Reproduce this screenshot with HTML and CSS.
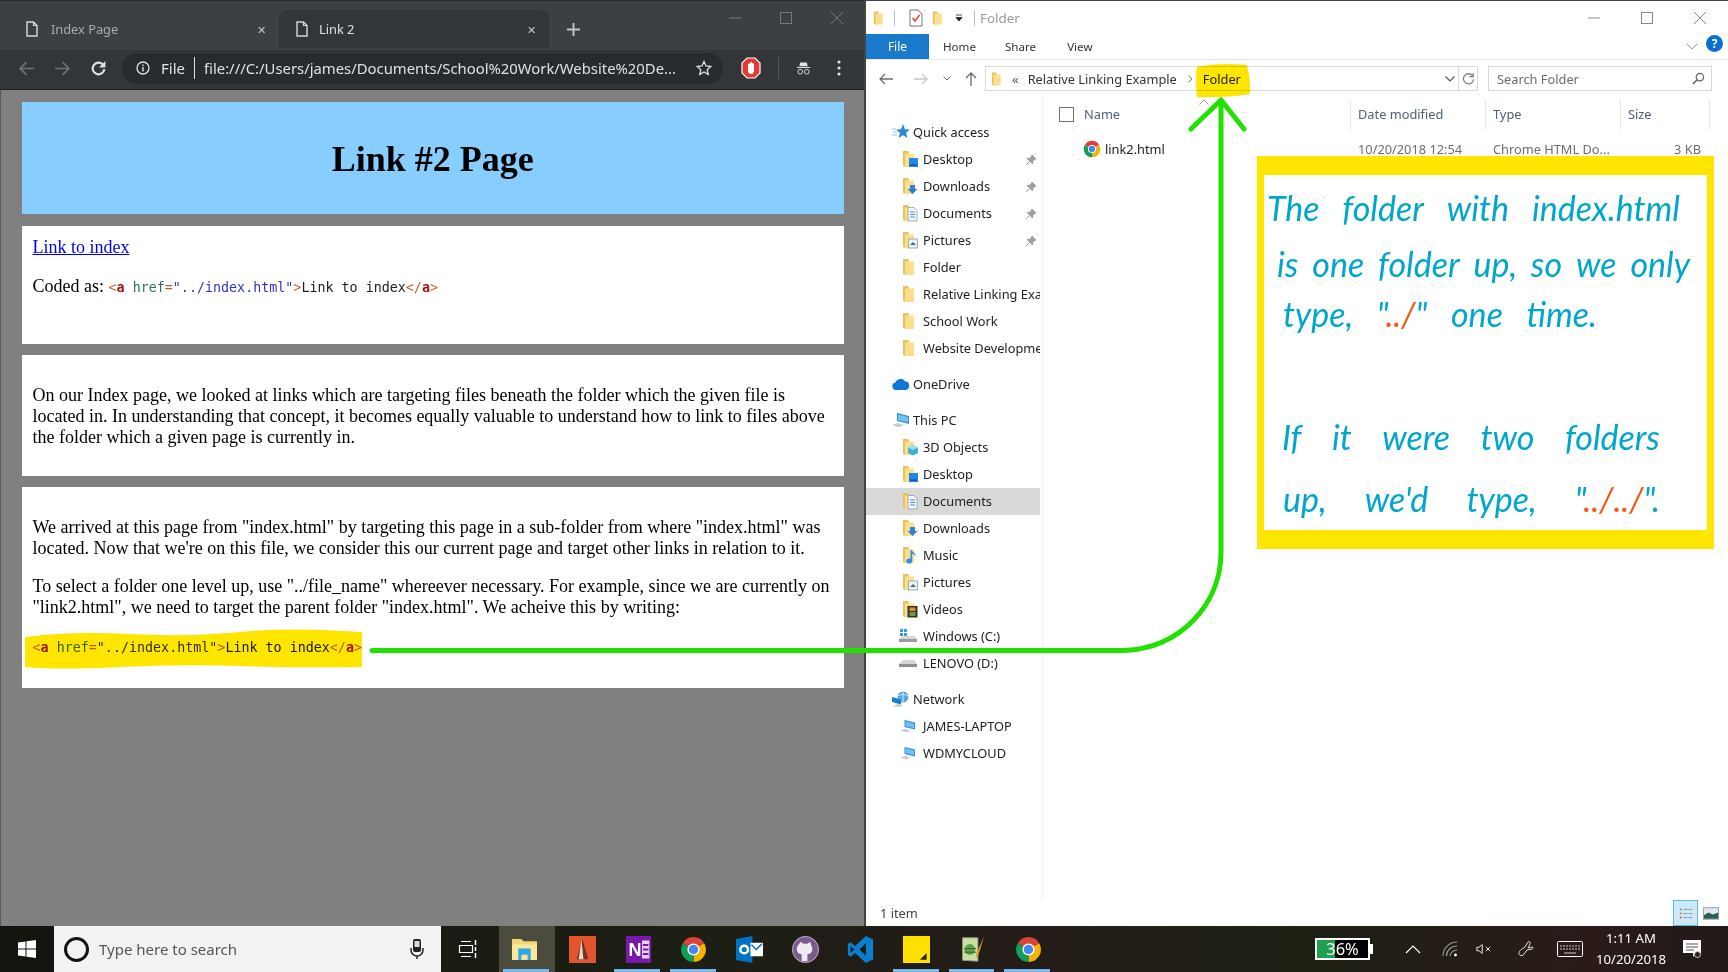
FILE: index.html
```html
<!DOCTYPE html>
<html lang="en">
<head>
<meta charset="utf-8">
<title>Relative linking</title>
<link rel="stylesheet" href="styles.css">
</head>
<body>
<svg class="defs" aria-hidden="true">
  <symbol id="doc" viewBox="0 0 12 16"><path d="M1 1h6.5L11 4.5V15H1z" fill="none" stroke="currentColor" stroke-width="1.4"/><path d="M7.5 1v3.5H11" fill="none" stroke="currentColor" stroke-width="1.2"/></symbol>
  <symbol id="chrome" viewBox="0 0 24 24"><path d="M12 12L2.47 6.5A11 11 0 0 1 21.53 6.5Z" fill="#db4437"/><path d="M12 12L21.53 6.5A11 11 0 0 1 12 23Z" fill="#f4b400"/><path d="M12 12L12 23A11 11 0 0 1 2.47 6.5Z" fill="#0f9d58"/><circle cx="12" cy="12" r="5.4" fill="#fff"/><circle cx="12" cy="12" r="4.2" fill="#4285f4"/></symbol>
  <symbol id="folder" viewBox="0 0 16 18"><path d="M1 1h5l1 1.5V17H3l-2-1z" fill="#e9c25f"/><path d="M3 3.5h9V17H3z" fill="#fbdf8c"/></symbol>
  <symbol id="f-desktop" viewBox="0 0 16 18"><use href="#folder" width="16" height="18"/><rect x="7" y="8" width="9" height="9" fill="#1e88e5"/><rect x="8" y="14.5" width="7" height="1.2" fill="#0d47a1"/></symbol>
  <symbol id="f-down" viewBox="0 0 16 18"><use href="#folder" width="16" height="18"/><path d="M8 8h5v4h2.5l-5 5-5-5H8z" fill="#2f80d8"/></symbol>
  <symbol id="f-docs" viewBox="0 0 16 18"><use href="#folder" width="16" height="18"/><path d="M6 3.5h6l3 3V17H6z" fill="#f4f7fa" stroke="#8d99a6" stroke-width=".8"/><path d="M8 8h5M8 10.5h5M8 13h5" stroke="#4e8fd0"/></symbol>
  <symbol id="f-pics" viewBox="0 0 16 18"><use href="#folder" width="16" height="18"/><rect x="6.5" y="8" width="9" height="9" fill="#eef2f5" stroke="#8d99a6" stroke-width=".8"/><path d="M8 14l3-3 3 3z" fill="#3b6e8f"/></symbol>
  <symbol id="f-3d" viewBox="0 0 16 18"><use href="#folder" width="16" height="18"/><path d="M11 7l5 2.5v5.5l-5 2.5-5-2.5V9.500z" fill="#39b4cf"/><path d="M6 9.500l5 2.500 5-2.500-5-2.500z" fill="#9fe0ee"/></symbol>
  <symbol id="f-music" viewBox="0 0 16 18"><use href="#folder" width="16" height="18"/><path d="M8.500 2.500c.5 3 5.500 4 5 8-.5-1.500-2-2.500-3.300-2.800V15a3 2.500 0 1 1-1.700-2.200z" fill="#2a8fe3"/></symbol>
  <symbol id="f-video" viewBox="0 0 16 18"><use href="#folder" width="16" height="18"/><rect x="5.500" y="6" width="10" height="11.500" fill="#39332a"/><rect x="7.500" y="7.500" width="6" height="3.500" fill="#d88f3c"/><rect x="7.500" y="12" width="6" height="4" fill="#6f9a4a"/></symbol>
  <symbol id="pin" viewBox="0 0 12 12"><path d="M7 1l4 4-1.500.5L7.800 7.500 7.500 10 2 4.500l2.500-.3L6.500 2.500zM4 8L1 11" fill="#9aa0a6" stroke="#9aa0a6"/></symbol>
  <symbol id="star" viewBox="0 0 18 16"><path d="M11 0l2 5.200 5 .3-3.900 3.300 1.300 5.200L11 11.200 6.600 14l1.300-5.200L4 5.500l5-.3z" fill="#2b88d8"/><path d="M0 5h4M1 8h4M0 11h5" stroke="#8cc4f0"/></symbol>
  <symbol id="cloud" viewBox="0 0 18 14"><path d="M4 13a3.800 3.800 0 0 1-.7-7.500A5.500 5.500 0 0 1 13 4.200 4.500 4.500 0 0 1 14 13z" fill="#0f78d4"/></symbol>
  <symbol id="pc" viewBox="0 0 18 16"><path d="M5 1l12 3v8l-12-3z" fill="#2f8fdc"/><path d="M6 2.500l10 2.500v5.500l-10-2.500z" fill="#71c0f3"/><path d="M0 13l6-2 6 2-5 2.500z" fill="#c9ced3"/></symbol>
  <symbol id="net" viewBox="0 0 18 16"><circle cx="11" cy="6" r="5.500" fill="#5aa5de"/><path d="M6 5c3-2 7-2 10 0M11 .5v11" stroke="#d7ecfa" fill="none"/><path d="M0 6l9 2.500v5L0 11z" fill="#1d7fce"/><path d="M1 15l5-2 5 1.500-4 1.500z" fill="#c4c9cd"/></symbol>
  <symbol id="drive" viewBox="0 0 18 10"><path d="M4 2h11l3 4v3H0V6z" fill="#d5d7d9"/><path d="M0 6h18v3H0z" fill="#8d9094"/></symbol>
  <symbol id="drive-win" viewBox="0 0 18 14"><path d="M1 0h3v3H1zM5 0h3v3H5zM1 4h3v3H1zM5 4h3v3H5z" fill="#29a3e6"/><path d="M4 7h11l3 3v3H0v-3z" fill="#d5d7d9"/><path d="M0 10h18v3H0z" fill="#9a9da0"/></symbol>
</svg>

<div class="desktop">
  <div class="windows">
    <section class="chrome-win">
      <div class="tabstrip">
        <div class="tab">
          <svg class="tab-icon"><use href="#doc"/></svg><span class="tab-title">Index Page</span><span class="tab-x">✕</span>
        </div>
        <div class="tab tab-active">
          <svg class="tab-icon"><use href="#doc"/></svg><span class="tab-title">Link 2</span><span class="tab-x">✕</span>
        </div>
        <svg class="newtab" viewBox="0 0 14 14"><path d="M7 0v14M0 7h14" stroke="#c4c7ca" stroke-width="2"/></svg>
        <div class="winctl winctl-dark">
          <svg viewBox="0 0 12 12"><path d="M0 6h12" stroke="currentColor"/></svg>
          <svg viewBox="0 0 12 12"><rect x=".5" y=".5" width="11" height="11" fill="none" stroke="currentColor"/></svg>
          <svg viewBox="0 0 12 12"><path d="M0 0l12 12M12 0L0 12" stroke="currentColor"/></svg>
        </div>
      </div>
      <div class="toolbar">
        <svg class="tool dim" viewBox="0 0 16 16"><path d="M15 8H2M8 2L2 8l6 6" fill="none" stroke="currentColor" stroke-width="1.600"/></svg>
        <svg class="tool dim" viewBox="0 0 16 16"><path d="M1 8h13M8 2l6 6-6 6" fill="none" stroke="currentColor" stroke-width="1.600"/></svg>
        <svg class="tool" viewBox="0 0 16 16"><path d="M13.500 8.500A5.500 5.500 0 1 1 12 4.200" fill="none" stroke="currentColor" stroke-width="2"/><path d="M14.500 1v6h-6z" fill="currentColor"/></svg>
        <div class="omnibox">
          <svg class="info" viewBox="0 0 14 14"><circle cx="7" cy="7" r="6" fill="none" stroke="currentColor" stroke-width="1.300"/><path d="M7 6v4.500M7 3.500v1.500" stroke="currentColor" stroke-width="1.400"/></svg>
          <span class="scheme">File</span><span class="pipe"></span>
          <span class="url">file:///C:/Users/james/Documents/School%20Work/Website%20De...</span>
          <svg class="bookmark" viewBox="0 0 16 16"><path d="M8 1.500l2 4.500 4.800.5-3.600 3.200 1 4.800L8 12l-4.200 2.500 1-4.800L1.200 6.500 6 6z" fill="none" stroke="currentColor" stroke-width="1.300"/></svg>
        </div>
        <svg class="ext-stop" viewBox="0 0 20 22"><path d="M6 1h8l5 5v10l-5 5H6l-5-5V6z" fill="#e53935" stroke="#fff" stroke-width="1.200"/><path d="M7 15V7.500a1 1 0 0 1 2 0V6a1 1 0 0 1 2 0v1a1 1 0 0 1 2 0v7l-1.500 3H9z" fill="#fff"/></svg>
        <span class="tool-sep"></span>
        <svg class="incog" viewBox="0 0 16 16"><path d="M4.500 2h7l1 4h-9zM1 7h14v1H1z" fill="currentColor"/><circle cx="4.500" cy="12" r="2.500" fill="none" stroke="currentColor"/><circle cx="11.500" cy="12" r="2.500" fill="none" stroke="currentColor"/></svg>
        <svg class="menu" viewBox="0 0 4 16"><circle cx="2" cy="2" r="1.600" fill="currentColor"/><circle cx="2" cy="8" r="1.600" fill="currentColor"/><circle cx="2" cy="14" r="1.600" fill="currentColor"/></svg>
      </div>
      <main class="viewport">
        <header class="panel panel-head"><h1>Link #2 Page</h1></header>
        <section class="panel panel-a">
          <p class="first"><a href="#top">Link to index</a></p>
          <p>Coded as: <code class="code"><span class="c-b">&lt;</span><b class="c-t">a</b> <span class="c-h">href</span><span class="c-b">=</span><span class="c-s">"../index.html"</span><span class="c-b">&gt;</span>Link to index<span class="c-b">&lt;/</span><b class="c-t">a</b><span class="c-b">&gt;</span></code></p>
        </section>
        <section class="panel panel-b">
          <p>On our Index page, we looked at links which are targeting files beneath the folder which the given file is located in. In understanding that concept, it becomes equally valuable to understand how to link to files above the folder which a given page is currently in.</p>
        </section>
        <section class="panel panel-c">
          <p>We arrived at this page from "index.html" by targeting this page in a sub-folder from where "index.html" was located. Now that we're on this file, we consider this our current page and target other links in relation to it.</p>
          <p>To select a folder one level up, use "../file_name" whereever necessary. For example, since we are currently on "link2.html", we need to target the parent folder "index.html". We acheive this by writing:</p>
          <p><code class="code"><span class="c-b">&lt;</span><b class="c-t">a</b> <span class="c-h">href</span><span class="c-b">=</span><span class="c-s">"../index.html"</span><span class="c-b">&gt;</span>Link to index<span class="c-b">&lt;/</span><b class="c-t">a</b><span class="c-b">&gt;</span></code></p>
        </section>
      </main>
    </section>

    <section class="explorer">
      <div class="ex-title">
        <svg class="qa-folder"><use href="#folder"/></svg>
        <span class="qa-sep"></span>
        <svg class="qa-check" viewBox="0 0 14 18"><path d="M1 1h8l4 4v12H1z" fill="#fff" stroke="#777"/><path d="M3.500 9l2.500 3 4.500-6" fill="none" stroke="#e0492b" stroke-width="1.500"/></svg>
        <svg class="qa-folder"><use href="#folder"/></svg>
        <svg class="qa-drop" viewBox="0 0 8 8"><path d="M1 1h6M1 3.500h6l-3 3.500z" fill="#222" stroke="#222" stroke-width=".8"/></svg>
        <span class="qa-sep qa-sep-b"></span>
        <span class="ex-name">Folder</span>
        <div class="winctl winctl-light">
          <svg viewBox="0 0 12 12"><path d="M0 6h12" stroke="currentColor"/></svg>
          <svg viewBox="0 0 12 12"><rect x=".5" y=".5" width="11" height="11" fill="none" stroke="currentColor"/></svg>
          <svg viewBox="0 0 12 12"><path d="M0 0l12 12M12 0L0 12" stroke="currentColor"/></svg>
        </div>
      </div>
      <div class="ribbon">
        <span class="rib-file">File</span>
        <span class="rib-tab rib-home">Home</span>
        <span class="rib-tab rib-share">Share</span>
        <span class="rib-tab rib-view">View</span>
        <svg class="rib-chev" viewBox="0 0 12 7"><path d="M1 1l5 5 5-5" fill="none" stroke="#9a9a9a"/></svg>
        <span class="rib-help">?</span>
      </div>
      <div class="addrrow">
        <svg class="nav-btn nb-back" viewBox="0 0 14 12"><path d="M14 6H1M6 1L1 6l5 5" fill="none" stroke="#6d6d6d" stroke-width="1.300"/></svg>
        <svg class="nav-btn nb-fwd" viewBox="0 0 14 12"><path d="M0 6h13M8 1l5 5-5 5" fill="none" stroke="#c8c8c8" stroke-width="1.300"/></svg>
        <svg class="nb-drop" viewBox="0 0 8 5"><path d="M.5.500L4 4 7.500.500" fill="none" stroke="#6d6d6d"/></svg>
        <svg class="nb-up" viewBox="0 0 12 14"><path d="M6 14V1M1 6l5-5 5 5" fill="none" stroke="#6d6d6d" stroke-width="1.300"/></svg>
        <div class="addr">
          <svg class="addr-folder"><use href="#folder"/></svg>
          <span class="crumb-more">«</span>
          <span class="crumb">Relative Linking Example</span>
          <svg class="crumb-sep" viewBox="0 0 5 8"><path d="M.5.500L4 4 .5 7.500" fill="none" stroke="#777"/></svg>
          <span class="crumb crumb-cur">Folder</span>
          <svg class="addr-drop" viewBox="0 0 10 6"><path d="M.5.500L5 5 9.500.500" fill="none" stroke="#555" stroke-width="1.200"/></svg>
          <span class="addr-refresh"><svg viewBox="0 0 14 14"><path d="M11.500 4A5.500 5.500 0 1 0 12.500 8" fill="none" stroke="#777" stroke-width="1.200"/><path d="M12 1v4H8" fill="none" stroke="#777" stroke-width="1.200"/></svg></span>
        </div>
        <div class="search">
          <span>Search Folder</span>
          <svg viewBox="0 0 14 14"><circle cx="8.500" cy="5.500" r="4" fill="none" stroke="#666" stroke-width="1.300"/><path d="M5.500 8.500L1 13" stroke="#666" stroke-width="1.600"/></svg>
        </div>
      </div>
      <div class="ex-body">
        <nav class="tree">
          <div class="tree-group">
            <div class="tree-row top"><svg class="ti-top"><use href="#star"/></svg><span>Quick access</span></div>
            <div class="tree-row"><svg class="ti"><use href="#f-desktop"/></svg><span>Desktop</span><svg class="pin"><use href="#pin"/></svg></div>
            <div class="tree-row"><svg class="ti"><use href="#f-down"/></svg><span>Downloads</span><svg class="pin"><use href="#pin"/></svg></div>
            <div class="tree-row"><svg class="ti"><use href="#f-docs"/></svg><span>Documents</span><svg class="pin"><use href="#pin"/></svg></div>
            <div class="tree-row"><svg class="ti"><use href="#f-pics"/></svg><span>Pictures</span><svg class="pin"><use href="#pin"/></svg></div>
            <div class="tree-row"><svg class="ti"><use href="#folder"/></svg><span>Folder</span></div>
            <div class="tree-row"><svg class="ti"><use href="#folder"/></svg><span>Relative Linking Example</span></div>
            <div class="tree-row"><svg class="ti"><use href="#folder"/></svg><span>School Work</span></div>
            <div class="tree-row"><svg class="ti"><use href="#folder"/></svg><span>Website Development</span></div>
          </div>
          <div class="tree-group">
            <div class="tree-row top"><svg class="ti-top"><use href="#cloud"/></svg><span>OneDrive</span></div>
          </div>
          <div class="tree-group">
            <div class="tree-row top"><svg class="ti-top"><use href="#pc"/></svg><span>This PC</span></div>
            <div class="tree-row"><svg class="ti"><use href="#f-3d"/></svg><span>3D Objects</span></div>
            <div class="tree-row"><svg class="ti"><use href="#f-desktop"/></svg><span>Desktop</span></div>
            <div class="tree-row selected"><svg class="ti"><use href="#f-docs"/></svg><span>Documents</span></div>
            <div class="tree-row"><svg class="ti"><use href="#f-down"/></svg><span>Downloads</span></div>
            <div class="tree-row"><svg class="ti"><use href="#f-music"/></svg><span>Music</span></div>
            <div class="tree-row"><svg class="ti"><use href="#f-pics"/></svg><span>Pictures</span></div>
            <div class="tree-row"><svg class="ti"><use href="#f-video"/></svg><span>Videos</span></div>
            <div class="tree-row"><svg class="ti-wide"><use href="#drive-win"/></svg><span>Windows (C:)</span></div>
            <div class="tree-row"><svg class="ti-wide"><use href="#drive"/></svg><span>LENOVO (D:)</span></div>
          </div>
          <div class="tree-group">
            <div class="tree-row top"><svg class="ti-top"><use href="#net"/></svg><span>Network</span></div>
            <div class="tree-row"><svg class="ti-wide"><use href="#pc"/></svg><span>JAMES-LAPTOP</span></div>
            <div class="tree-row"><svg class="ti-wide"><use href="#pc"/></svg><span>WDMYCLOUD</span></div>
          </div>
        </nav>
        <div class="list">
          <div class="list-head">
            <div class="col col-name"><span class="check"></span><span>Name</span><svg class="sort" viewBox="0 0 10 6"><path d="M.5 5.500L5 1l4.500 4.500" fill="none" stroke="#9a9a9a"/></svg></div>
            <div class="col">Date modified</div>
            <div class="col">Type</div>
            <div class="col">Size</div>
          </div>
          <div class="list-row">
            <div class="cell cell-name"><svg class="file-icon"><use href="#chrome"/></svg><span>link2.html</span></div>
            <div class="cell">10/20/2018 12:54</div>
            <div class="cell">Chrome HTML Do...</div>
            <div class="cell cell-size">3 KB</div>
          </div>
        </div>
      </div>
      <div class="ex-status">
        <span>1 item</span>
        <div class="views">
          <span class="view view-on"><svg viewBox="0 0 18 16"><path d="M1 1h3v14H1z" fill="#e4e4e4"/><path d="M1.500 2h2v2h-2z" fill="#3b86c6"/><path d="M1.500 7h2v2h-2z" fill="#7a9a4a"/><path d="M1.500 12h2v2h-2z" fill="#d9453a"/><path d="M6 3h5M12 3h5M6 8h5M12 8h5M6 13h5M12 13h5" stroke="#8a8a8a"/></svg></span>
          <span class="view"><svg viewBox="0 0 18 14"><rect x=".5" y=".5" width="17" height="13" fill="#dfeaf2" stroke="#9a9a9a"/><path d="M1 9l5-3 5 2 6-2v7H1z" fill="#2e5f55"/></svg></span>
        </div>
      </div>
    </section>
  </div>

  <footer class="taskbar">
    <span class="start"><svg viewBox="0 0 18 18"><path d="M0 2.500l7.500-1V8.500H0zM8.500 1.300L18 0v8.500H8.500zM0 9.500h7.500v7L0 15.500zM8.500 9.500H18V18l-9.500-1.300z" fill="#fff"/></svg></span>
    <div class="searchbox">
      <span class="cortana"></span>
      <span class="search-text">Type here to search</span>
      <svg class="mic" viewBox="0 0 14 20"><rect x="3" y="0" width="8" height="13" rx="2" fill="#222"/><rect x="4.500" y="2" width="5" height="6" fill="#ddd"/><path d="M1 9v2a6 6 0 0 0 12 0V9M7 17v3" fill="none" stroke="#222" stroke-width="1.500"/></svg>
    </div>
    <span class="taskview"><svg viewBox="0 0 18 18"><path d="M2 1.500h10M.5 5.500h13v7H.5zM2 16.500h10" fill="none" stroke="#fff" stroke-width="1.200"/><path d="M16.500 0v5M16.500 7v4M16.500 13v5" stroke="#fff" stroke-width="1.500"/></svg></span>
    <div class="apps">
      <span class="app app-active"><svg viewBox="0 0 26 24"><path d="M1 2h9l2 2h13v18H1z" fill="#f7d774"/><path d="M1 7h24v15H1z" fill="#fce69b"/><rect x="7" y="11" width="12" height="11" fill="#29a9e6"/><rect x="10" y="17" width="6" height="5" fill="#fce69b"/></svg></span>
      <span class="app"><svg viewBox="0 0 28 28"><rect width="28" height="28" fill="#e2542d"/><path d="M14 4l6 20H8z" fill="#6b3327"/><path d="M13 4l2 20h-5z" fill="#e8d9cc"/></svg></span>
      <span class="app app-open"><svg viewBox="0 0 28 30"><rect width="28" height="30" rx="1" fill="#7719aa"/><rect x="18" y="5" width="8" height="20" fill="#e9d5f3"/><path d="M19 10h6M19 15h6M19 20h6" stroke="#7719aa" stroke-width="2"/><text class="app-letter" x="3" y="22">N</text></svg></span>
      <span class="app app-open"><svg viewBox="0 0 24 24"><use href="#chrome" width="24" height="24"/></svg></span>
      <span class="app"><svg viewBox="0 0 28 28"><path d="M0 3l17-3v28L0 25z" fill="#0072c6"/><circle cx="8.500" cy="14" r="4" fill="none" stroke="#fff" stroke-width="2.600"/><rect x="15" y="7" width="13" height="14" fill="#fff"/><path d="M16 9l5 5 6-6" fill="none" stroke="#0072c6" stroke-width="1.500"/></svg></span>
      <span class="app"><svg viewBox="0 0 28 28"><circle cx="14" cy="14" r="13.500" fill="#7a5b8c" stroke="#c9b8d2"/><path d="M9 6l3 2h4l3-2 1 4c1.500 2 1.500 6-1 8-1 .8-2 1-3 1v7h-6v-7c-1 0-2-.2-3-1-2.500-2-2.500-6-1-8z" fill="#efe9f2"/></svg></span>
      <span class="app"><svg viewBox="0 0 28 30"><path d="M20 0l8 4v22l-8 4L8 19l-5 4-3-2V9l3-2 5 4z" fill="#0b7ed0"/><path d="M20 8l-7 7 7 7zM3 11v8l4-4z" fill="#1c1c14"/></svg></span>
      <span class="app app-open"><svg viewBox="0 0 24 24"><rect width="24" height="24" fill="#ffe000"/><path d="M15 21l6-6v6z" fill="#222"/></svg></span>
      <span class="app app-open"><svg viewBox="0 0 26 30"><path d="M2 2h17v26l-17-1z" fill="#c8e0a0" stroke="#999"/><circle cx="10" cy="15" r="6" fill="#5da34a"/><path d="M4 14h13M4 18h13" stroke="#2f5a26"/><path d="M26 0l-6 20-3 5 .5-6z" fill="#d49a1f"/></svg></span>
      <span class="app app-open"><svg viewBox="0 0 24 24"><use href="#chrome" width="24" height="24"/></svg></span>
    </div>
    <div class="tray">
      <div class="battery"><span class="battery-fill" style="width:36%"></span><span class="battery-text">36%</span></div>
      <svg class="tr tr-chev" viewBox="0 0 16 9"><path d="M1 8l7-7 7 7" fill="none" stroke="#fff" stroke-width="1.200"/></svg>
      <svg class="tr" viewBox="0 0 16 16"><path d="M1 15A14 14 0 0 1 15 1M4.500 15A10 10 0 0 1 15 5M8 15a7 7 0 0 1 7-6" fill="none" stroke="#9b9b9b" stroke-width="1.100"/><circle cx="13.500" cy="14" r="1.400" fill="#fff"/></svg>
      <svg class="tr" viewBox="0 0 18 12"><path d="M1 4h2.500L7 1v10L3.500 8H1z" fill="none" stroke="#fff"/><path d="M11 3.500l5 5M16 3.500l-5 5" stroke="#fff"/></svg>
      <svg class="tr tr-pen" viewBox="0 0 18 18"><path d="M3 15c-2-1-1-4 2-6l3-2 3-5c1-1 3 0 2 2l-2 4 4-1c2 0 1 2 0 2l-5 1-3 4c-1 2-3 2-4 1z" fill="none" stroke="#ddd"/></svg>
      <svg class="tr tr-kbd" viewBox="0 0 26 16"><rect x=".5" y=".5" width="25" height="15" rx="1" fill="none" stroke="#fff"/><path d="M3 5h20M3 8h20" stroke="#ccc" stroke-dasharray="2 1"/><path d="M7 12h12" stroke="#ccc"/></svg>
      <div class="clock"><span>1:11 AM</span><span>10/20/2018</span></div>
      <svg class="tr tr-note" viewBox="0 0 18 18"><path d="M0 0h18v13h-5l-3 4v-4H0z" fill="#fff"/><path d="M3 4h12M3 7h12M3 10h8" stroke="#555"/><circle cx="14.500" cy="14.500" r="3" fill="#222" stroke="#ccc"/></svg>
    </div>
  </footer>

  <svg class="highlighter" viewBox="0 0 1728 972" aria-hidden="true">
    <path d="M25 637Q70 631 130 634T240 632T362 632L362 667Q300 668 240 666T120 667T25 667Z" fill="#ffe600"/>
    <path d="M1197 67Q1220 62 1247 65Q1251 80 1250 94Q1225 98 1197 97Q1195 80 1197 67Z" fill="#ffe600"/>
  </svg>
  <svg class="pen-arrow" viewBox="0 0 1728 972" aria-hidden="true">
    <path d="M372 650.500H1124C1180 648 1221 605 1221 552V100M1191 129L1221 100L1244 129" fill="none" stroke="#22e000" stroke-width="5" stroke-linecap="round" stroke-linejoin="round"/>
  </svg>
  <aside class="note">
    <div class="ink-line l1"><span>The</span><span>folder</span><span>with</span><span>index.html</span></div>
    <div class="ink-line l2"><span>is</span><span>one</span><span>folder</span><span>up,</span><span>so</span><span>we</span><span>only</span></div>
    <div class="ink-line l3"><span>type,</span><span>"<b class="ink-o">../</b>"</span><span>one</span><span>time.</span></div>
    <div class="ink-line l4"><span>If</span><span>it</span><span>were</span><span>two</span><span>folders</span></div>
    <div class="ink-line l5"><span>up,</span><span>we'd</span><span>type,</span><span>"<b class="ink-o">../../</b>".</span></div>
  </aside>
</div>
</body>
</html>
```

FILE: styles.css
```css
* { box-sizing: border-box; }
html, body { margin: 0; padding: 0; height: 100%; overflow: hidden; }
body { font-family: "Noto Sans", "Open Sans", sans-serif; }
.defs { display: none; }
svg { display: block; flex: none; overflow: visible; }

.desktop { position: relative; width: 1728px; height: 972px; display: flex; flex-direction: column; overflow: hidden; }
.windows { display: flex; height: 926px; }

/* Chrome window */
.chrome-win { width: 864px; display: flex; flex-direction: column; background: #808080; }
.tabstrip { height: 50px; background: #3d4043; padding: 10px 0 0 0; display: flex; position: relative; border-top: 1px solid #2a2c2e; }
.tab { width: 279px; height: 38px; margin-top: -1px; padding: 0 13px 0 26px; display: flex; align-items: center; color: #a9abad; font-size: 12.8px; border-radius: 8px 8px 0 0; }
.tab-active { width: 270px; background: #323639; color: #dfe1e3; padding-left: 17px; }
.tab-icon { width: 12px; height: 16px; margin-right: 13px; color: #d5d7d9; }
.tab-active .tab-icon { margin-right: 11px; }
.tab-title { flex: 1; }
.tab-x { font-size: 11px; color: #c8cacc; }
.newtab { width: 13px; height: 13px; margin: 12px 0 0 18px; }
.winctl { position: absolute; display: flex; }
.winctl svg { width: 12px; height: 12px; }
.winctl-dark { right: 21px; top: 11px; color: #777a7d; gap: 39px; }
.winctl-light { right: 22px; top: 11px; color: #8a8a8a; gap: 41px; }
.toolbar { height: 40px; background: #323639; display: flex; align-items: center; padding: 0 0 3px 18px; border-bottom: 1px solid #202124; color: #dfe1e3; }
.tool { width: 17px; height: 17px; margin-right: 19px; }
.tool.dim { color: #6e7276; }
.tool:nth-child(3) { margin-right: 15px; }
.omnibox { width: 601px; height: 31px; margin-left: 0; background: #282b2e; border-radius: 16px; display: flex; align-items: center; padding: 0 11px 0 14px; }
.info { width: 14px; height: 14px; margin-right: 11px; }
.scheme { font-size: 15px; }
.pipe { width: 1px; height: 22px; background: #dfe1e3; margin: 0 9px 0 9px; }
.url { flex: 1; white-space: nowrap; overflow: hidden; font-size: 14.85px; color: #dfe1e3; }
.bookmark { width: 16px; height: 16px; }
.ext-stop { width: 20px; height: 22px; margin-left: 18px; }
.tool-sep { width: 1px; height: 22px; background: #55585b; margin: 0 17px 0 17px; }
.incog { width: 15px; height: 20px; }
.menu { width: 4px; height: 16px; margin-left: 26px; }

.viewport { flex: 1; padding: 12px 20px 0 20.5px; border-left: 1px solid #5a5a5a; font-family: "Liberation Serif", "Times New Roman", serif; font-size: 18px; line-height: 21px; color: #000; }
.panel { background: #fff; padding: 0 11px; margin-bottom: 12px; overflow: hidden; }
.panel-head { height: 112px; background: #87ceff; display: flex; align-items: center; justify-content: center; padding-top: 1px; }
.panel-head h1 { margin: 0; font-size: 36px; font-weight: bold; line-height: 40px; }
.panel-a { height: 118px; margin-bottom: 11px; }
.panel-b { height: 121px; padding-top: 12px; margin-bottom: 11px; }
.panel-c { height: 201px; padding-top: 12px; }
.panel p { margin: 17.6px 0; }
.panel p.first { margin: 11px 0 15px; }
.panel a { color: #0000ee; }
.code { font-family: "DejaVu Sans Mono", monospace; font-size: 13.35px; color: #222; }
.c-b { color: #b5652a; }
.c-t { color: #a31515; }
.c-h { color: #2f6f5f; }
.c-s { color: #3434c8; }

/* Explorer */
.explorer { width: 864px; display: flex; flex-direction: column; background: #fff; border-left: 2px solid #444; border-top: 1px solid #444; color: #222; font-size: 12.8px; }
.ex-title { height: 33px; display: flex; align-items: center; padding-left: 7px; position: relative; }
.qa-folder { width: 13px; height: 18px; }
.qa-sep { width: 1px; height: 16px; background: #bbb; margin: 0 14px 0 8px; }
.qa-sep-b { margin: 0 5px 0 11px; }
.qa-check { width: 14px; height: 18px; margin-right: 9px; }
.qa-drop { width: 8px; height: 8px; margin-left: 10px; }
.ex-name { color: #9a9a9a; font-size: 13.4px; }
.ribbon { height: 26px; display: flex; align-items: stretch; border-bottom: 1px solid #e5e5e5; position: relative; }
.rib-file { width: 63px; background: #1979ca; color: #fff; display: flex; align-items: center; justify-content: center; font-size: 12px; }
.rib-tab { font-size: 11.6px; color: #333; line-height: 26px; }
.rib-home { margin-left: 14px; }
.rib-share { margin-left: 29px; }
.rib-view { margin-left: 31px; }
.rib-chev { width: 12px; height: 7px; position: absolute; right: 30px; top: 9px; }
.rib-help { position: absolute; right: 5px; top: 1px; width: 17px; height: 17px; border-radius: 50%; background: #0a6fd1; color: #fff; font-weight: bold; font-size: 12px; line-height: 17px; text-align: center; }
.addrrow { height: 37px; display: flex; align-items: center; padding-left: 13px; }
.nav-btn { width: 14px; height: 12px; }
.nb-fwd { margin-left: 21px; }
.nb-drop { width: 8px; height: 5px; margin-left: 15px; }
.nb-up { width: 12px; height: 14px; margin-left: 14px; }
.addr { width: 493px; height: 25px; margin-left: 8px; border: 1px solid #d9d9d9; display: flex; align-items: center; padding-left: 5px; position: relative; }
.addr-folder { width: 13px; height: 18px; }
.crumb-more { margin: 0 9px 0 8px; font-size: 13px; color: #555; }
.crumb { color: #333; }
.crumb-sep { width: 5px; height: 8px; margin: 0 10px 0 11px; }
.crumb-cur { color: #222; }
.addr-drop { width: 10px; height: 6px; position: absolute; right: 22px; top: 9px; }
.addr-refresh { position: absolute; right: 0; top: 0; bottom: 0; width: 19px; border-left: 1px solid #d9d9d9; display: flex; align-items: center; justify-content: center; }
.addr-refresh svg { width: 13px; height: 13px; }
.search { width: 224px; height: 25px; margin-left: 10px; border: 1px solid #d9d9d9; display: flex; align-items: center; justify-content: space-between; padding: 0 6px 0 8px; color: #6d6d6d; }
.search svg { width: 13px; height: 13px; }
.ex-body { flex: 1; display: flex; min-height: 0; }

.tree { width: 176px; margin-top: 21.5px; }
.tree-group { margin-bottom: 9px; }
.tree-row { height: 27px; width: 174px; display: flex; align-items: center; padding-left: 37px; position: relative; white-space: nowrap; overflow: hidden; color: #222; }
.tree-row.top { padding-left: 29px; }
.tree-row.selected { background: #d9d9d9; }
.ti { width: 16px; height: 18px; margin-right: 5px; flex: none; margin-left: -1px; }
.ti-top { width: 18px; height: 16px; margin-right: 3px; margin-left: -3px; }
.ti-wide { width: 18px; height: 14px; margin-right: 6px; margin-left: -4px; }
.pin { position: absolute; left: 159px; top: 8px; width: 12px; height: 12px; }

.list { flex: 1; border-left: 1px solid #f0f0f0; }
.list-head, .list-row { display: grid; grid-template-columns: 308px 135px 135px 89px; }
.list-head { height: 29px; margin-top: 3px; color: #4c607a; }
.col { border-right: 1px solid #e5e5e5; padding-left: 7px; line-height: 29px; }
.col-name { display: flex; align-items: center; padding-left: 16px; position: relative; }
.check { width: 15px; height: 15px; border: 1px solid #707070; margin-right: 10px; }
.sort { width: 10px; height: 6px; position: absolute; left: 156px; top: -1px; }
.list-row { height: 27px; margin-top: 6px; align-items: center; color: #6d6d6d; }
.cell { padding-left: 7px; white-space: nowrap; }
.cell-name { display: flex; align-items: center; padding-left: 40px; color: #222; }
.file-icon { width: 18px; height: 18px; margin-right: 4px; }
.cell-size { text-align: right; padding-right: 9px; }
.ex-status { height: 26px; display: flex; align-items: center; justify-content: space-between; padding-left: 14px; color: #444; }
.views { display: flex; align-items: center; height: 26px; margin-right: 5px; }
.view { width: 25px; height: 26px; display: flex; align-items: center; justify-content: center; border: 1px solid transparent; }
.view svg { width: 16px; height: 13px; }
.view-on { background: #cde8f8; border-color: #63b8e8; }

/* Taskbar */
.taskbar { height: 46px; display: flex; align-items: center; background: linear-gradient(90deg, #14140f 0%, #1d1f14 40%, #241c18 60%, #1e2014 75%, #2a1b19 92%, #211b17 100%); color: #fff; }
.start { width: 54px; height: 46px; display: flex; align-items: center; justify-content: center; }
.start svg { width: 18px; height: 18px; }
.searchbox { width: 387px; height: 46px; background: #f2f2f2; display: flex; align-items: center; padding-left: 10px; position: relative; }
.cortana { width: 25px; height: 25px; border: 3px solid #111; border-radius: 50%; margin-right: 10px; }
.search-text { color: #555; font-size: 15px; }
.mic { width: 14px; height: 20px; position: absolute; left: 356px; top: 13px; }
.taskview { width: 54px; margin-right: 4px; display: flex; justify-content: center; }
.taskview svg { width: 18px; height: 18px; }
.apps { display: flex; }
.app { width: 55.7px; height: 46px; display: flex; align-items: center; justify-content: center; position: relative; }
.app svg { width: 27px; height: 27px; }
.app-active { background: #4b4b3e; }
.app-active svg { margin-right: 4px; }
.app-active::after, .app-open::after { content: ""; position: absolute; left: 4px; right: 6px; bottom: 0; height: 3px; background: #76b9ed; }
.app-letter { fill: #fff; font-family: "Liberation Sans", sans-serif; font-weight: bold; font-size: 20px; }
.tray { margin-left: auto; display: flex; align-items: center; height: 46px; }
.battery { width: 55px; height: 22px; border: 2px solid #fff; background: #000; position: relative; margin-right: 35px; }
.battery::after { content: ""; position: absolute; right: -5px; top: 4px; width: 3px; height: 10px; background: #fff; }
.battery-fill { position: absolute; left: 0; top: 0; bottom: 0; background: #1ea04f; }
.battery-text { position: absolute; inset: 0; text-align: center; font-size: 16.5px; line-height: 18px; }
.tr { width: 16px; height: 16px; margin-right: 18px; }
.tr-chev { height: 9px; margin-right: 21px; }
.tr-pen { width: 18px; height: 18px; margin-left: 7px; margin-right: 22px; }
.tr-kbd { width: 26px; height: 16px; margin-right: 11px; }
.clock { width: 74px; display: flex; flex-direction: column; align-items: center; font-size: 13.2px; line-height: 21px; }
.tr-note { width: 18px; height: 18px; margin: 0 27px 0 15px; }

/* Annotations drawn over the windows */
.highlighter { position: absolute; left: 0; top: 0; width: 1728px; height: 972px; mix-blend-mode: multiply; pointer-events: none; }
.pen-arrow { position: absolute; left: 0; top: 0; width: 1728px; height: 972px; pointer-events: none; }
.note { position: absolute; left: 1257px; top: 156px; width: 457px; height: 393px; background: #fff; border: solid #ffe600; border-width: 19px 7px; padding-top: 6px; font-family: "Lato", "Open Sans", sans-serif; font-style: italic; font-weight: 400; font-size: 34px; color: #00a6cc; overflow: hidden; }
.ink-line { height: 52px; display: flex; justify-content: space-between; align-items: center; white-space: nowrap; }
.ink-o { color: #f05a16; font-weight: inherit; }
.l1 { margin-left: 3px; width: 413px; }
.l2 { margin-left: 13px; width: 413px; margin-top: 4px; }
.l3 { margin-left: 19px; width: 314px; margin-top: -2px; }
.l4 { margin-left: 18px; width: 378px; margin-top: 71px; }
.l5 { margin-left: 19px; width: 377px; margin-top: 10px; }
```
